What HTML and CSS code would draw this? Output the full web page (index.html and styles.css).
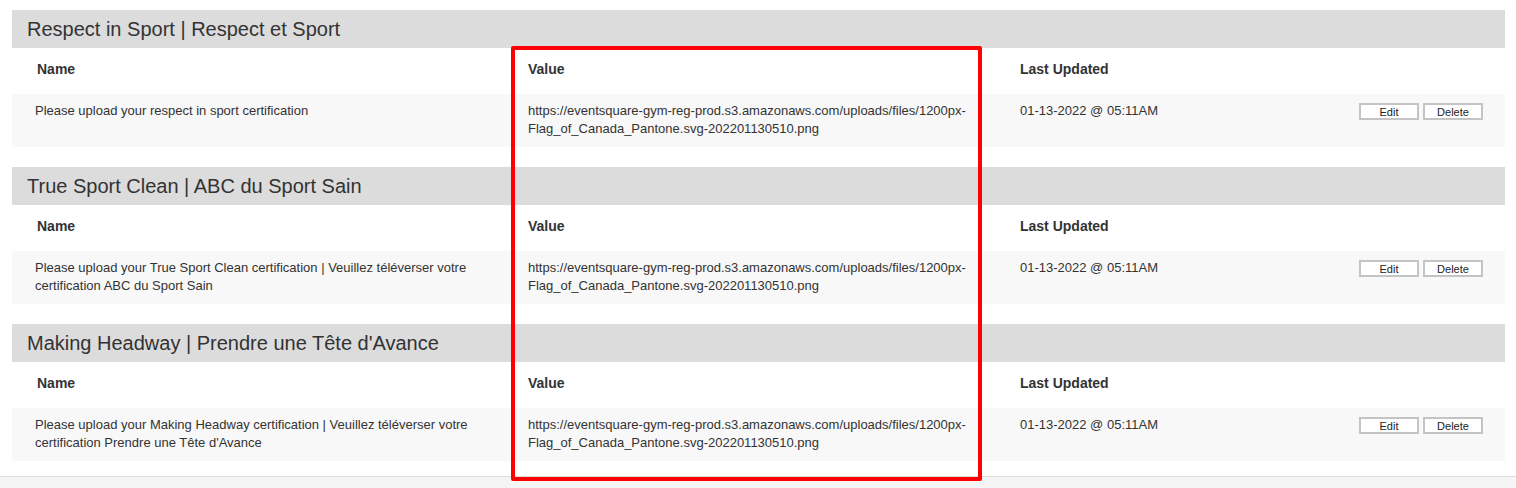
FILE: index.html
```html
<!DOCTYPE html>
<html lang="en">
<head>
    <meta charset="UTF-8">
    <meta name="viewport" content="width=device-width, initial-scale=1.0">
    <title>Certifications</title>
    <link rel="stylesheet" href="styles.css">
</head>
<body>
    <div class="page">
        <section class="group">
            <h2 class="group-title">Respect in Sport | Respect et Sport</h2>
            <div class="grid head">
                <div class="cell name">Name</div>
                <div class="cell">Value</div>
                <div class="cell">Last Updated</div>
                <div class="cell"></div>
            </div>
            <div class="grid row">
                <div class="cell name">Please upload your respect in sport certification</div>
                <div class="cell">https://eventsquare-gym-reg-prod.s3.amazonaws.com/uploads/files/1200px-Flag_of_Canada_Pantone.svg-202201130510.png</div>
                <div class="cell">01-13-2022 @ 05:11AM</div>
                <div class="cell actions">
                    <button type="button" class="btn">Edit</button>
                    <button type="button" class="btn">Delete</button>
                </div>
            </div>
        </section>

        <section class="group">
            <h2 class="group-title">True Sport Clean | ABC du Sport Sain</h2>
            <div class="grid head">
                <div class="cell name">Name</div>
                <div class="cell">Value</div>
                <div class="cell">Last Updated</div>
                <div class="cell"></div>
            </div>
            <div class="grid row">
                <div class="cell name">Please upload your True Sport Clean certification | Veuillez téléverser votre certification ABC du Sport Sain</div>
                <div class="cell">https://eventsquare-gym-reg-prod.s3.amazonaws.com/uploads/files/1200px-Flag_of_Canada_Pantone.svg-202201130510.png</div>
                <div class="cell">01-13-2022 @ 05:11AM</div>
                <div class="cell actions">
                    <button type="button" class="btn">Edit</button>
                    <button type="button" class="btn">Delete</button>
                </div>
            </div>
        </section>

        <section class="group">
            <h2 class="group-title">Making Headway | Prendre une Tête d'Avance</h2>
            <div class="grid head">
                <div class="cell name">Name</div>
                <div class="cell">Value</div>
                <div class="cell">Last Updated</div>
                <div class="cell"></div>
            </div>
            <div class="grid row">
                <div class="cell name">Please upload your Making Headway certification | Veuillez téléverser votre certification Prendre une Tête d'Avance</div>
                <div class="cell">https://eventsquare-gym-reg-prod.s3.amazonaws.com/uploads/files/1200px-Flag_of_Canada_Pantone.svg-202201130510.png</div>
                <div class="cell">01-13-2022 @ 05:11AM</div>
                <div class="cell actions">
                    <button type="button" class="btn">Edit</button>
                    <button type="button" class="btn">Delete</button>
                </div>
            </div>
        </section>
    </div>
    <footer class="footer"></footer>

    <!-- annotation box round the Value column -->
    <div class="highlight"></div>
</body>
</html>
```

FILE: styles.css
```css
body {
    margin: 0;
    padding: 0;
    font-family: "Liberation Sans", Arial, sans-serif;
    color: #333;
    background-color: #fff;
    min-height: 100vh;
    display: flex;
    flex-direction: column;
    position: relative;
}

.page {
    padding: 10px 11px 15px 12px;
}

.group {
    margin-bottom: 20px;
}

.group:last-child {
    margin-bottom: 0;
}

.group-title {
    margin: 0;
    height: 38px;
    line-height: 38px;
    padding-left: 15px;
    font-size: 20px;
    font-weight: normal;
    background-color: #dcdcdc;
    color: #333;
}

/* tabel: kolom Name / Value / Last Updated / tombol */
.grid {
    display: grid;
    grid-template-columns: 508px 492px 1fr auto;
    font-size: 13px;
    line-height: 18px;
}

.cell {
    padding-left: 8px;
    padding-right: 8px;
}

.cell.name {
    padding-left: 23px;
}

.head {
    height: 46px;
    font-weight: bold;
    font-size: 14px;
}

.head .cell {
    padding-top: 12px;
}

.head .cell.name {
    padding-left: 25px;
}

.row {
    min-height: 53px;
    background-color: #f8f8f8;
    box-sizing: border-box;
    padding-top: 8px;
    padding-bottom: 9px;
}

.actions {
    display: flex;
    gap: 4px;
    padding-right: 22px;
    margin-top: 1px;
    align-items: flex-start;
}

.btn {
    width: 60px;
    height: 17px;
    padding: 0;
    font-family: "Liberation Sans", Arial, sans-serif;
    font-size: 11px;
    color: #222;
    background-color: #fff;
    border: 2px solid #c4c4c4;
    cursor: pointer;
}

.btn:hover {
    background-color: #f0f0f0;
}

.footer {
    flex: 1;
    border-top: 1px solid #dedede;
    background-color: #f5f5f5;
}

.highlight {
    position: absolute;
    left: 511px;
    top: 46px;
    width: 463px;
    height: 427px;
    border: 4px solid #ff0000;
    border-radius: 2px;
}
```
